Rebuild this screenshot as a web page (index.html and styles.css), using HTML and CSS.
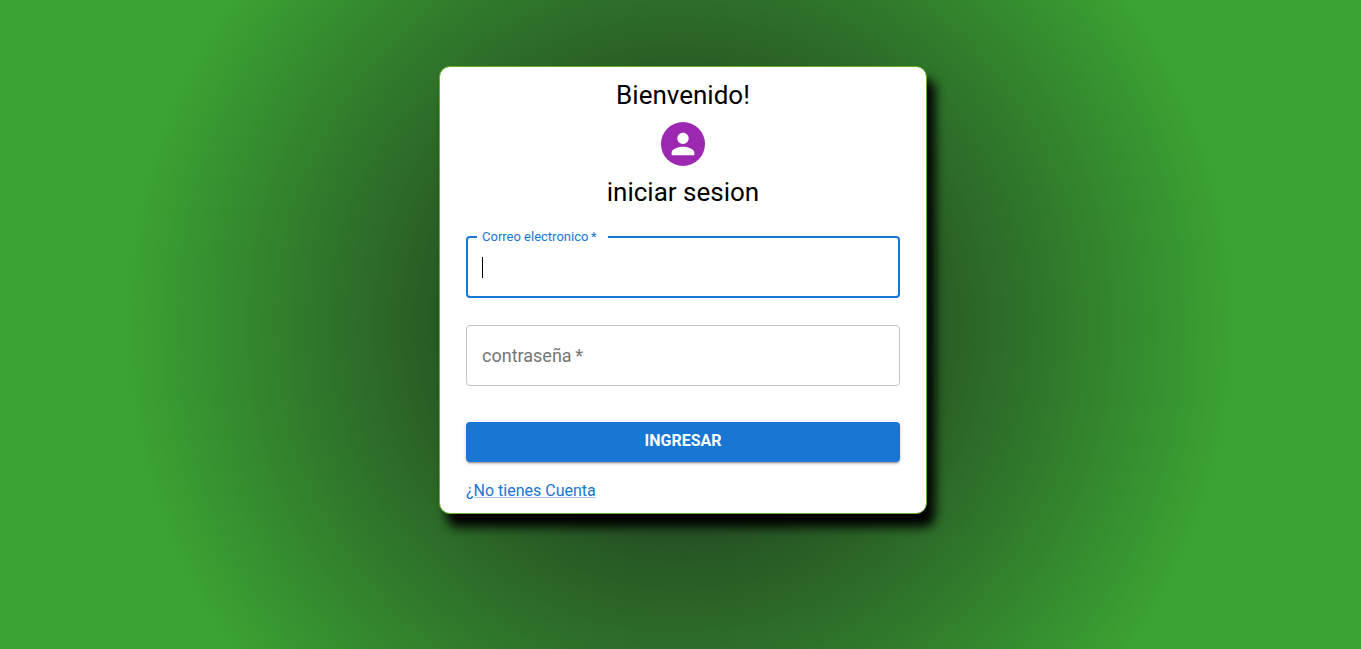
FILE: index.html
```html
<!DOCTYPE html>
<html lang="es">
<head>
<meta charset="utf-8">
<title>Iniciar sesion</title>
<link rel="stylesheet" href="styles.css">
</head>
<body>
<main class="page">
  <section class="card">
    <h1 class="heading">Bienvenido!</h1>
    <div class="avatar">
      <svg class="avatar-icon" viewBox="0 0 24 24" aria-hidden="true"><path d="M12 12c2.210 0 4-1.790 4-4s-1.790-4-4-4-4 1.790-4 4 1.790 4 4 4zm0 2c-2.670 0-8 1.340-8 4v2h16v-2c0-2.660-5.330-4-8-4z"/></svg>
    </div>
    <h2 class="heading">iniciar sesion</h2>
    <form class="form">
      <fieldset class="field field-active">
        <legend class="legend"><label for="email">Correo electronico&thinsp;*</label></legend>
        <input class="input" id="email" type="email" required autofocus>
      </fieldset>
      <div class="field field-idle">
        <input class="input" id="password" type="password" placeholder="contraseña&thinsp;*" aria-label="contraseña" required>
      </div>
      <button class="submit" type="submit">INGRESAR</button>
    </form>
    <a class="link" href="#">¿No tienes Cuenta</a>
  </section>
</main>
</body>
</html>
```
FILE: styles.css
```css
* { box-sizing: border-box; }

body {
  margin: 0;
  font-family: Roboto, "Liberation Sans", sans-serif;
  color: #000;
}

.page {
  min-height: 100vh;
  padding: 66px 16px 16px 21px;
  background: radial-gradient(circle, #19231a 0%, #3ba333 74%);
}

.card {
  display: flex;
  flex-direction: column;
  align-items: center;
  max-width: 488px;
  margin: 0 auto;
  padding: 11px 26px 11px;
  border: 1px solid #69b02d;
  border-radius: 11px;
  background: #fff;
  box-shadow: 8px 13px 11px #000;
}

.heading {
  margin: 0;
  font-size: 26px;
  font-weight: 400;
  line-height: 35px;
}

.avatar {
  display: flex;
  align-items: center;
  justify-content: center;
  width: 44px;
  height: 44px;
  margin: 9px;
  border-radius: 50%;
  background: #9c27b0;
}

.avatar-icon {
  width: 34px;
  height: 34px;
  fill: #fff;
}

.form {
  display: flex;
  flex-direction: column;
  width: 100%;
}

.field {
  min-width: 0;
  margin: 0;
  border-radius: 4px;
}

.field-active {
  margin-top: 19px;
  padding: 0 12px 15px 9px;
  border: 2px solid #1976d2;
}

.field-idle {
  margin-top: 27px;
  padding: 16px 15px;
  border: 1px solid #c4c4c4;
}

.legend {
  padding: 0 11px 0 5px;
  color: #1976d2;
  font-size: 13px;
  line-height: 16px;
}

.input {
  display: block;
  width: 100%;
  height: 27px;
  padding: 0;
  border: 0;
  outline: 0;
  background: none;
  color: #212121;
  font: 400 18px/27px Roboto, "Liberation Sans", sans-serif;
}

.field-active .input {
  height: 36px;
  padding-left: 5px;
}

.field-active .input:invalid {
  caret-color: transparent;
  background: linear-gradient(#000, #000) 5px 12px / 1px 21px no-repeat;
}

.input::placeholder {
  color: #757575;
  opacity: 1;
}

.submit {
  height: 40px;
  margin-top: 36px;
  padding: 0 0 3px;
  border: 0;
  border-radius: 4px;
  background: #1976d2;
  box-shadow: 0 3px 1px -2px rgba(0, 0, 0, .2), 0 2px 2px rgba(0, 0, 0, .14), 0 1px 5px rgba(0, 0, 0, .12);
  color: #fff;
  font: 700 16px/27px Roboto, "Liberation Sans", sans-serif;
}

.link {
  align-self: flex-start;
  margin-top: 18px;
  color: #1976d2;
  font-size: 16px;
  line-height: 22px;
  text-decoration-color: rgba(25, 118, 210, .4);
}
```
